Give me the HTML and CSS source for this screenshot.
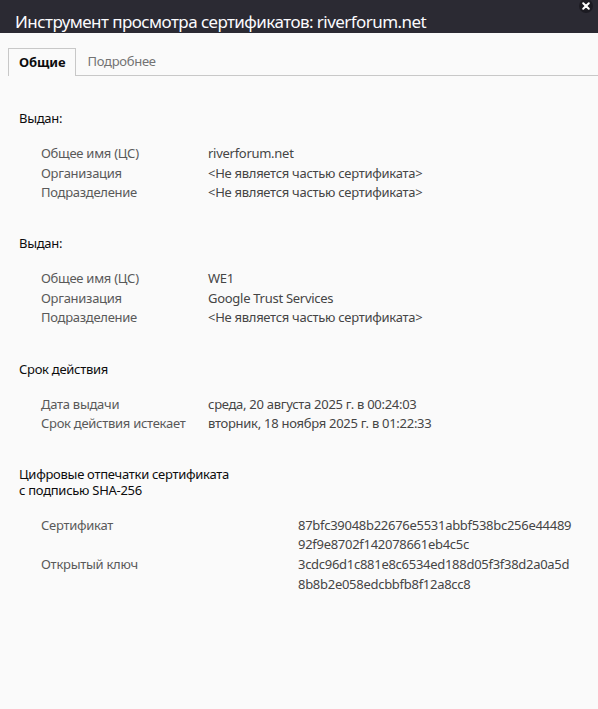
FILE: index.html
```html
<!DOCTYPE html>
<html lang="ru">
<head>
<meta charset="utf-8">
<title>Инструмент просмотра сертификатов</title>
<link rel="stylesheet" href="styles.css">
</head>
<body>
<header class="titlebar">
  <h1 class="title">Инструмент просмотра сертификатов: riverforum.net</h1>
  <button class="close" aria-label="Закрыть">
    <svg width="14" height="14" viewBox="0 0 14 14"><circle cx="7" cy="7" r="7" fill="#1c1b22"/><path d="M4.2 4.2 L9.8 9.8 M9.8 4.2 L4.2 9.8" stroke="#fff" stroke-width="2" stroke-linecap="round"/></svg>
  </button>
</header>
<nav class="tabs">
  <div class="tab active">Общие</div>
  <div class="tab">Подробнее</div>
  <div class="tab-fill"></div>
</nav>
<main class="content">
  <section class="section">
    <h2 class="heading">Выдан:</h2>
    <div class="rows">
      <div class="label">Общее имя (ЦС)</div><div class="value">riverforum.net</div>
      <div class="label">Организация</div><div class="value">&lt;Не является частью сертификата&gt;</div>
      <div class="label">Подразделение</div><div class="value">&lt;Не является частью сертификата&gt;</div>
    </div>
  </section>
  <section class="section">
    <h2 class="heading">Выдан:</h2>
    <div class="rows">
      <div class="label">Общее имя (ЦС)</div><div class="value">WE1</div>
      <div class="label">Организация</div><div class="value">Google Trust Services</div>
      <div class="label">Подразделение</div><div class="value">&lt;Не является частью сертификата&gt;</div>
    </div>
  </section>
  <section class="section">
    <h2 class="heading">Срок действия</h2>
    <div class="rows">
      <div class="label">Дата выдачи</div><div class="value">среда, 20 августа 2025 г. в 00:24:03</div>
      <div class="label">Срок действия истекает</div><div class="value">вторник, 18 ноября 2025 г. в 01:22:33</div>
    </div>
  </section>
  <section class="section">
    <h2 class="heading">Цифровые отпечатки сертификата<br>с подписью SHA-256</h2>
    <div class="rows wide">
      <div class="label">Сертификат</div><div class="value">87bfc39048b22676e5531abbf538bc256e44489<br>92f9e8702f142078661eb4c5c</div>
      <div class="label">Открытый ключ</div><div class="value">3cdc96d1c881e8c6534ed188d05f3f38d2a0a5d<br>8b8b2e058edcbbfb8f12a8cc8</div>
    </div>
  </section>
</main>
</body>
</html>
```

FILE: styles.css
```css
* { box-sizing: border-box; }
html, body { margin: 0; padding: 0; }
body {
  background: #fafafa;
  font-family: "Noto Sans", "Open Sans", sans-serif;
  font-size: 13px;
  letter-spacing: -0.28px;
  color: #444;
  width: 598px;
  height: 709px;
  overflow: hidden;
}
.titlebar {
  position: relative;
  height: 33px;
  background: #2b2a33;
  overflow: hidden;
}
.title {
  margin: 0;
  padding: 10px 0 0 15px;
  font-size: 17px;
  letter-spacing: -0.55px;
  font-weight: 400;
  line-height: 24px;
  color: #fbfbfe;
  white-space: nowrap;
}
.close {
  position: absolute;
  top: -1px;
  right: 5px;
  width: 14px;
  height: 14px;
  padding: 0;
  border: 0;
  background: none;
  line-height: 0;
}
.tabs {
  display: flex;
  margin-top: 15px;
  height: 28px;
}
.tab {
  padding: 0 11px;
  line-height: 26px;
  color: #737373;
  border-bottom: 1px solid #c8c8c8;
}
.tab.active {
  margin-left: 8px;
  color: #0c0c0d;
  font-weight: 700;
  letter-spacing: -0.1px;
  border: 1px solid #c8c8c8;
  border-bottom: 0;
  padding: 0 10px;
}
.tab-fill {
  flex: 1;
  border-bottom: 1px solid #c8c8c8;
}
.content {
  padding: 35px 0 0 19px;
}
.section {
  margin-bottom: 33.5px;
}
.heading {
  margin: 0 0 17.5px;
  font-size: 13px;
  font-weight: 400;
  line-height: 15.5px;
  color: #0c0c0d;
}
.rows {
  display: grid;
  grid-template-columns: 167px 1fr;
  padding-left: 22px;
  line-height: 19.6px;
}
.rows.wide {
  grid-template-columns: 257px 1fr;
}
.label { color: #595959; }
.value { color: #454545; }
```
